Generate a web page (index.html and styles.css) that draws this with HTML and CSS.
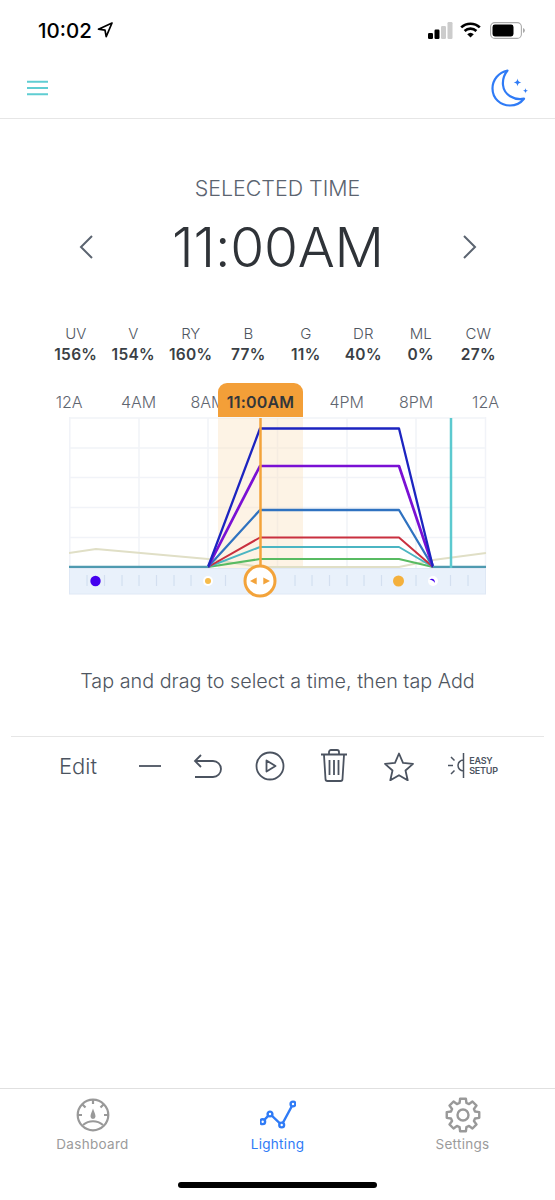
FILE: index.html
```html
<!DOCTYPE html>
<html lang="en">
<head>
<meta charset="utf-8">
<title>Lighting</title>
<link rel="stylesheet" href="styles.css">
</head>
<body>
<div class="page">
  <div class="statusbar">
    <div class="clock"><span>10:02</span>
      <svg class="loc" viewBox="0 0 16 16"><path d="M15 1 1.500 7.200 8 8.200 9.200 14.600Z" fill="none" stroke="#000" stroke-width="1.700" stroke-linejoin="round"/></svg>
    </div>
    <div class="sysicons">
      <svg class="signal" viewBox="0 0 25 17"><rect x="0" y="11" width="5" height="6" rx="1.200" fill="#000"/><rect x="6.500" y="7.500" width="5" height="9.500" rx="1.200" fill="#000"/><rect x="13" y="4" width="5" height="13" rx="1.200" fill="#ccc"/><rect x="19.500" y="0" width="5" height="17" rx="1.200" fill="#ccc"/></svg>
      <svg class="wifi" viewBox="0 0 21 16"><path d="M1.200 5.400a13.500 13.500 0 0 1 18.600 0" fill="none" stroke="#000" stroke-width="2.600"/><path d="M4.600 9a8.600 8.600 0 0 1 11.800 0" fill="none" stroke="#000" stroke-width="2.600"/><path d="M10.500 15.600 7.200 12.200a4.800 4.800 0 0 1 6.600 0Z" fill="#000"/></svg>
      <svg class="battery" viewBox="0 0 35 17"><rect x=".6" y=".6" width="30.800" height="15.800" rx="4.200" fill="none" stroke="#aaa" stroke-width="1.100"/><rect x="2.500" y="2.500" width="21" height="12" rx="2.400" fill="#000"/><path d="M33 6v5a2.600 2.600 0 0 0 0-5Z" fill="#aaa"/></svg>
    </div>
  </div>

  <header class="topbar">
    <svg class="menu" viewBox="0 0 22 16"><path d="M0 1.500h22M0 8h22M0 14.500h22" stroke="#5fcdd2" stroke-width="2"/></svg>
    <svg class="moon" viewBox="0 0 38 38"><path d="M16.500 1.500C7.500 3.500 1.500 10.800 1.500 19.500c0 10 8 17 17.500 17 5.500 0 10.500-2.300 14-6.800-10 1.800-20-3.800-21-13.700-.6-6 1.500-10.800 4.500-14.500Z" fill="none" stroke="#2f7bf6" stroke-width="2.200" stroke-linejoin="round"/><path d="M26.500 9.500c.5 2.700 1.200 3.400 3.800 3.900-2.600.5-3.300 1.200-3.800 3.900-.5-2.700-1.200-3.400-3.800-3.900 2.600-.5 3.300-1.200 3.800-3.900ZM34.500 19c.3 1.900.8 2.400 2.700 2.700-1.900.3-2.400.8-2.700 2.700-.3-1.900-.8-2.400-2.700-2.700 1.900-.3 2.400-.8 2.700-2.700Z" fill="#2f7bf6"/></svg>
  </header>

  <main class="main">
    <div class="selected-label">SELECTED TIME</div>
    <div class="time-row">
      <svg class="chev" viewBox="0 0 16 26"><path d="M14 2 3 13l11 11" fill="none" stroke="#5b6470" stroke-width="2"/></svg>
      <div class="time">11:00AM</div>
      <svg class="chev" viewBox="0 0 16 26"><path d="m2 2 11 11L2 24" fill="none" stroke="#5b6470" stroke-width="2"/></svg>
    </div>

    <div class="channels">
      <div class="channel"><span class="ch-name">UV</span><b class="ch-val">156%</b></div>
      <div class="channel"><span class="ch-name">V</span><b class="ch-val">154%</b></div>
      <div class="channel"><span class="ch-name">RY</span><b class="ch-val">160%</b></div>
      <div class="channel"><span class="ch-name">B</span><b class="ch-val">77%</b></div>
      <div class="channel"><span class="ch-name">G</span><b class="ch-val">11%</b></div>
      <div class="channel"><span class="ch-name">DR</span><b class="ch-val">40%</b></div>
      <div class="channel"><span class="ch-name">ML</span><b class="ch-val">0%</b></div>
      <div class="channel"><span class="ch-name">CW</span><b class="ch-val">27%</b></div>
    </div>

    <section class="chart">
      <div class="axis">
        <span>12A</span><span>4AM</span><span>8AM</span><span></span><span>4PM</span><span>8PM</span><span>12A</span>
      </div>
      <div class="time-tag">11:00AM</div>
      <svg class="plot" viewBox="69 416 419 182">
        <g stroke="#f1f3f8" stroke-width="1.500" fill="none">
          <path d="M69.800 417v151M139 418v150M208 418v150M277.500 418v150M347 418v150M416 418v150M485.500 417v151"/>
          <path d="M69 418h417M69 448h417M69 477.500h417M69 507.500h417M69 537.500h417"/>
        </g>
        <rect x="218" y="418" width="85" height="150" fill="#fbe3c2" fill-opacity=".42"/>
        <g fill="none" stroke-linejoin="round">
          <path d="M69 553 96 549 208 559 260 567H399L433 560 486 553" stroke="#e0dfc6" stroke-width="2"/>
          <path d="M208 567 260 559H399L433 567" stroke="#58bb62" stroke-width="2"/>
          <path d="M208 567 260 547H399L433 567" stroke="#4bb5c2" stroke-width="2"/>
          <path d="M208 567 260 537.500H399L433 567" stroke="#c9303f" stroke-width="2"/>
          <path d="M208 567 260 510H399L433 567" stroke="#2f72c0" stroke-width="2.300"/>
          <path d="M208 567 260 466H399L433 567" stroke="#7a10d4" stroke-width="2.700"/>
          <path d="M208 567 260 428.500H399L433 567" stroke="#1c24c0" stroke-width="2.300"/>
          <path d="M69 567H208M433 567H486" stroke="#4f9ab0" stroke-width="2.600"/>
        </g>
        <rect x="69.500" y="568.500" width="416" height="25.500" fill="#e9f1fb" stroke="#dfe8f5"/>
        <path d="M87 575v11M104.500 575v11M122 575v11M139 575v11M156.500 575v11M174 575v11M191 575v11M225.500 575v11M295 575v11M312 575v11M329.500 575v11M347 575v11M364 575v11M381.500 575v11M416 575v11M450.500 575v11M468 575v11" stroke="#d3dff0" stroke-width="1.200"/>
        <path d="M260.500 418v150" stroke="#f3a33a" stroke-width="2.500"/>
        <path d="M451 418v150" stroke="#5cc9cf" stroke-width="2.500"/>
        <circle cx="95.500" cy="581" r="5.200" fill="#4400ee"/>
        <circle cx="208" cy="581" r="5" fill="#fff"/>
        <circle cx="208" cy="581" r="3" fill="#f6bb4a"/>
        <circle cx="398.500" cy="581" r="5.500" fill="#f4b03c"/>
        <circle cx="433" cy="581" r="5" fill="#fff"/>
        <path d="M429.500 579.500c2.500-1.500 5.500-.8 5.500 3.500-1-2-3-3-5.500-3.500Z" fill="#4400ee"/>
        <circle cx="260" cy="581" r="15" fill="#fff" stroke="#f3a33a" stroke-width="3"/>
        <path d="M256.700 577.500 250 581l6.700 3.500ZM263.300 577.500 270 581l-6.700 3.500Z" fill="#f3a33a"/>
      </svg>
    </section>

    <p class="hint">Tap and drag to select a time, then tap Add</p>

    <div class="toolbar">
      <span class="edit">Edit</span>
      <svg class="tool t-minus" viewBox="0 0 22 4"><path d="M0 2h22" stroke="#4b5360" stroke-width="1.800"/></svg>
      <svg class="tool t-undo" viewBox="0 0 30 26"><path d="M8 2 2 8l6 6M2.500 8H20a8 8 0 0 1 0 16H2" fill="none" stroke="#4b5360" stroke-width="1.800"/></svg>
      <svg class="tool t-play" viewBox="0 0 30 30"><circle cx="15" cy="15" r="13.500" fill="none" stroke="#4b5360" stroke-width="1.800"/><path d="M11.500 9.500 20.500 15l-9 5.500Z" fill="none" stroke="#4b5360" stroke-width="1.800" stroke-linejoin="round"/></svg>
      <svg class="tool t-trash" viewBox="0 0 28 33"><path d="M1 5.500h26M9 5V3a2 2 0 0 1 2-2h6a2 2 0 0 1 2 2v2M4 6l1.500 24a2 2 0 0 0 2 2h13a2 2 0 0 0 2-2L24 6M9.500 11v15M14 11v15M18.500 11v15" fill="none" stroke="#4b5360" stroke-width="1.800"/></svg>
      <svg class="tool t-star" viewBox="0 0 32 30"><path d="M16 2.500 20 11.800l10 1-7.500 6.700 2.200 9.800L16 24.200 7.300 29.300l2.200-9.800L2 12.800l10-1Z" fill="none" stroke="#4b5360" stroke-width="1.800" stroke-linejoin="round"/></svg>
      <div class="easy">
        <svg class="t-sun" viewBox="0 0 19 27"><path d="M15.500 1v25M15.500 8a5.500 5.500 0 0 0 0 11M0 13.500h5M3 5l3.500 3.500M3 22l3.500-3.500" fill="none" stroke="#4b5360" stroke-width="1.500"/></svg>
        <span class="easy-text">EASY<br>SETUP</span>
      </div>
    </div>
  </main>

  <nav class="tabbar">
    <div class="tab">
      <svg class="tab-icon" viewBox="0 0 36 36"><circle cx="18" cy="18" r="15.300" fill="none" stroke="#999" stroke-width="2.200"/><path d="M18 3v4M3 18h4M29 18h4M7.500 7.500l3 3M28.500 7.500l-3 3M8 28c6-5 14-5 20 0" fill="none" stroke="#999" stroke-width="2.200"/><path d="M18 11.500c1.500 4 2.500 6 2.500 8a2.500 2.500 0 0 1-5 0c0-2 1-4 2.500-8Z" fill="#999"/></svg>
      <span>Dashboard</span>
    </div>
    <div class="tab active">
      <svg class="tab-icon" viewBox="0 0 36 36"><path d="M2.700 24.700 10 17l11.700 11L33 7" fill="none" stroke="#2f7bf6" stroke-width="2.400"/><g fill="#fff" stroke="#2f7bf6" stroke-width="2.400"><circle cx="2.700" cy="24.700" r="2.400"/><circle cx="10" cy="17" r="2.400"/><circle cx="21.700" cy="28" r="2.400"/><circle cx="33" cy="7" r="2.400"/></g></svg>
      <span>Lighting</span>
    </div>
    <div class="tab">
      <svg class="tab-icon" viewBox="0 0 36 36"><path d="M30.020 14.550 34.250 15.130V20.870L30.020 21.450 28.930 24.060 31.520 27.460 27.460 31.520 24.060 28.930 21.450 30.020 20.870 34.250H15.130L14.550 30.020 11.940 28.930 8.540 31.520 4.480 27.460 7.070 24.060 5.980 21.450 1.750 20.870V15.130L5.980 14.550 7.070 11.940 4.480 8.540 8.540 4.480 11.940 7.070 14.550 5.980 15.130 1.750H20.870L21.450 5.980 24.060 7.070 27.460 4.480 31.520 8.540 28.930 11.940Z" fill="none" stroke="#999" stroke-width="2.400" stroke-linejoin="round"/><circle cx="18" cy="18" r="5.500" fill="none" stroke="#999" stroke-width="2.400"/></svg>
      <span>Settings</span>
    </div>
  </nav>
  <div class="home"><div class="home-bar"></div></div>
</div>
</body>
</html>
```
FILE: styles.css
```css
* { box-sizing: border-box; }
html, body { margin: 0; padding: 0; background: #fff; }
body { font-family: Inter, "Liberation Sans", sans-serif; color: #2f3338; }
.page { width: 555px; height: 1200px; display: flex; flex-direction: column; overflow: hidden; }

.statusbar { height: 58px; padding: 2px 30px 0 38px; display: flex; justify-content: space-between; align-items: center; }
.clock { display: flex; align-items: center; gap: 5px; font-size: 20.500px; font-weight: 500; color: #000; }
.loc { width: 16px; height: 16px; }
.sysicons { display: flex; align-items: center; gap: 9px; }
.signal { width: 25px; height: 17px; margin-right: -2px; }
.wifi { width: 21px; height: 16px; }
.battery { width: 35px; height: 17px; }

.topbar { height: 61px; border-bottom: 1.500px solid #e6e6e6; padding: 0 26px 0 27px; display: flex; justify-content: space-between; align-items: center; }
.menu { width: 21px; height: 16px; }
.moon { width: 38px; height: 38px; }

.main { flex: 1; display: flex; flex-direction: column; }
.selected-label { margin-top: 57px; text-align: center; font-size: 21.400px; font-weight: 300; line-height: 25px; color: #5b6470; }
.time-row { margin-top: 14px; padding: 0 77px 0 78px; height: 64px; display: flex; justify-content: space-between; align-items: center; }
.chev { width: 16px; height: 26px; }
.time { font-size: 55px; font-weight: 300; letter-spacing: -.2px; color: #2f3338; line-height: 64px; }

.channels { margin-top: 44px; padding-left: 47px; display: grid; grid-template-columns: repeat(8, 57.500px); }
.channel { display: flex; flex-direction: column; align-items: center; }
.ch-name { font-size: 15px; font-weight: 300; line-height: 21px; color: #4f5661; }
.ch-val { font-size: 15.500px; font-weight: 600; letter-spacing: .3px; line-height: 21px; color: #3a3f45; }

.chart { position: relative; margin-top: 18px; }
.axis { margin-left: 34.500px; height: 38px; display: grid; grid-template-columns: repeat(7, 69.400px); align-items: center; text-align: center; font-size: 16px; font-weight: 300; color: #5f6670; }
.time-tag { position: absolute; left: 218px; top: 0; width: 85px; height: 34px; background: #f39f38; border-radius: 9px 9px 0 0; text-align: center; font-size: 16px; font-weight: 600; letter-spacing: .2px; line-height: 38px; color: #33363a; }
.plot { display: block; width: 419px; height: 182px; margin-left: 69px; margin-top: -5px; }

.hint { margin: 70px 0 0; text-align: center; font-size: 19.800px; font-weight: 300; line-height: 26px; color: #4f5661; }

.toolbar { margin: 42px 11px 0; padding-left: 35px; height: 58px; border-top: 1.500px solid #e6e6e6; display: grid; grid-template-columns: 64px 80px 36px 88px 40px 90px 58px; align-items: center; justify-items: center; }
.edit { font-size: 22px; font-weight: 300; color: #4b5360; }
.t-minus { width: 22px; height: 4px; }
.t-undo { width: 30px; height: 26px; }
.t-play { width: 30px; height: 30px; }
.t-trash { width: 28px; height: 33px; }
.t-star { width: 32px; height: 30px; }
.easy { display: flex; align-items: center; gap: 2px; }
.t-sun { width: 19px; height: 27px; }
.easy-text { font-size: 9px; font-weight: 600; line-height: 10px; letter-spacing: -.2px; color: #4b5360; }

.tabbar { height: 74px; border-top: 1.500px solid #e0e0e0; display: grid; grid-template-columns: repeat(3, 185px); }
.tab { display: flex; flex-direction: column; align-items: center; padding-top: 8px; font-size: 13.500px; font-weight: 400; letter-spacing: .3px; color: #9b9b9b; }
.tab-icon { width: 36px; height: 36px; margin-bottom: 3px; }
.active { color: #2f7bf6; }

.home { height: 38px; display: flex; justify-content: center; padding-top: 20px; }
.home-bar { width: 199px; height: 6px; border-radius: 3px; background: #000; }
```
